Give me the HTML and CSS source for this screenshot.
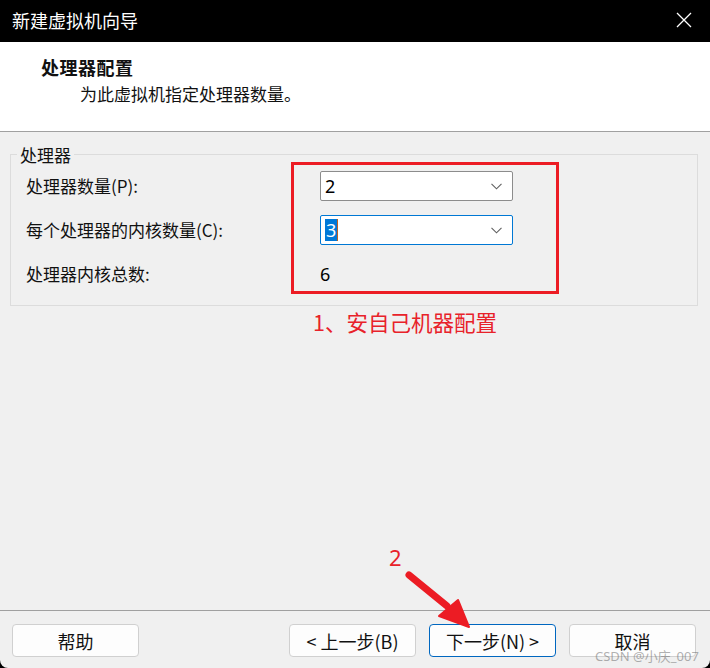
FILE: index.html
```html
<!DOCTYPE html>
<html lang="zh-CN">
<head>
<meta charset="utf-8">
<title>新建虚拟机向导</title>
<link rel="stylesheet" href="styles.css">
</head>
<body>
<div class="window">
  <div class="titlebar">
    <span class="title">新建虚拟机向导</span>
    <svg class="close" width="16" height="16" viewBox="0 0 16 16"><path d="M1 1L15 15M15 1L1 15" stroke="#fff" stroke-width="1.3" fill="none"/></svg>
  </div>
  <div class="header">
    <div class="h-title">处理器配置</div>
    <div class="h-sub">为此虚拟机指定处理器数量。</div>
  </div>
  <div class="content">
    <fieldset class="group">
      <legend>处理器</legend>
      <div class="rows">
        <div class="label">处理器数量(P):</div>
        <div class="combo">
          <span class="val">2</span>
          <svg class="chev" width="11" height="7" viewBox="0 0 11 7"><path d="M0.5 0.8L5.5 5.8L10.5 0.8" stroke="#606060" stroke-width="1.1" fill="none"/></svg>
        </div>
        <div class="label">每个处理器的内核数量(C):</div>
        <div class="combo focus">
          <span class="val sel">3</span><span class="caret"></span>
          <svg class="chev" width="11" height="7" viewBox="0 0 11 7"><path d="M0.5 0.8L5.5 5.8L10.5 0.8" stroke="#606060" stroke-width="1.1" fill="none"/></svg>
        </div>
        <div class="label">处理器内核总数:</div>
        <div class="total">6</div>
      </div>
    </fieldset>
  </div>
  <div class="footer">
    <button class="btn">帮助</button>
    <div class="nav">
      <button class="btn">&lt; 上一步(B)</button>
      <button class="btn primary">下一步(N) &gt;</button>
      <button class="btn">取消</button>
    </div>
  </div>

  <div class="redbox"></div>
  <div class="note1">1、安自己机器配置</div>
  <div class="note2">2</div>
  <svg class="arrow" width="710" height="668" viewBox="0 0 710 668">
    <line x1="409" y1="575" x2="447" y2="606" stroke="#ec1c24" stroke-width="7" stroke-linecap="round"/>
    <polygon points="439,616 458,600 469,627" fill="#ec1c24" stroke="#ec1c24" stroke-width="2" stroke-linejoin="round"/>
  </svg>
  <div class="watermark">CSDN @小庆_007</div>
</div>
</body>
</html>
```
FILE: styles.css
```css
html, body {
  margin: 0;
  padding: 0;
  background: #000;
}
.window {
  position: relative;
  width: 710px;
  height: 668px;
  display: flex;
  flex-direction: column;
  background: #f0f0f0;
  border-radius: 0 0 8px 8px;
  overflow: hidden;
  font-family: "Noto Sans CJK SC", "Noto Sans", sans-serif;
  color: #111;
}
.titlebar {
  height: 42px;
  flex: none;
  background: #000;
  color: #fff;
  display: flex;
  align-items: center;
  justify-content: space-between;
  padding: 0 18px 0 12px;
  font-size: 18px;
}
.title { line-height: 22px; margin-top: -3px; }
.close { margin-top: -3px; }
.header {
  flex: none;
  background: #fff;
  border-bottom: 1px solid #a0a0a0;
  padding-top: 14px;
  box-sizing: content-box;
  height: 75px;
}
.h-title {
  margin-left: 41px;
  font-size: 18px;
  font-weight: bold;
  line-height: 22px;
  letter-spacing: 0.5px;
}
.h-sub {
  margin-left: 80px;
  margin-top: 5px;
  font-size: 17px;
  line-height: 22px;
}
.content {
  flex: 1;
  padding: 12px 12px 0 10px;
}
.group {
  margin: 0;
  border: 1px solid #dcdcdc;
  padding: 6px 15px 16px 15px;
}
.group legend {
  font-size: 17px;
  line-height: 21px;
  padding: 0 3px;
  margin-left: -9px;
}
.rows {
  display: grid;
  grid-template-columns: 294px 193px;
  grid-auto-rows: 30px;
  row-gap: 14px;
  align-items: center;
}
.label {
  font-size: 17px;
  line-height: 22px;
}
.combo {
  height: 30px;
  box-sizing: border-box;
  background: #fff;
  border: 1px solid #8c8c8c;
  border-radius: 2px;
  display: flex;
  align-items: center;
  padding-left: 4px;
  position: relative;
}
.combo.focus { border-color: #0078d4; }
.val {
  font-family: "Noto Sans", sans-serif;
  font-size: 18px;
  line-height: 22px;
  color: #000;
}
.val.sel {
  background: #0078d7;
  color: #fff;
  padding: 0 1px;
}
.caret {
  width: 1px;
  height: 22px;
  background: #c06020;
}
.chev {
  position: absolute;
  right: 10px;
  top: 11px;
}
.total {
  font-family: "Noto Sans", sans-serif;
  font-size: 18px;
  line-height: 22px;
  color: #000;
}
.footer {
  flex: none;
  border-top: 1px solid #a0a0a0;
  padding: 13px 14px 11px 12px;
  display: flex;
  align-items: flex-start;
}
.nav {
  margin-left: auto;
  display: flex;
  gap: 13px;
}
.btn {
  width: 127px;
  height: 33px;
  box-sizing: border-box;
  background: #fdfdfd;
  border: 1px solid #d0d0d0;
  border-radius: 4px;
  font-family: "Noto Sans CJK SC", "Noto Sans", sans-serif;
  font-size: 18px;
  color: #111;
  padding: 0;
  line-height: 22px;
}
.btn.primary {
  border-color: #0067c0;
}
.redbox {
  position: absolute;
  left: 291px;
  top: 162px;
  width: 268px;
  height: 132px;
  box-sizing: border-box;
  border: 3px solid #ec1c24;
}
.note1 {
  position: absolute;
  left: 313px;
  top: 307px;
  font-size: 21.5px;
  line-height: 30px;
  color: #e8222a;
}
.note2 {
  position: absolute;
  left: 389px;
  top: 542px;
  font-family: "Noto Sans", sans-serif;
  font-size: 22px;
  line-height: 30px;
  color: #e8222a;
}
.arrow {
  position: absolute;
  left: 0;
  top: 0;
  pointer-events: none;
}
.watermark {
  position: absolute;
  left: 595px;
  top: 648px;
  font-size: 13px;
  line-height: 16px;
  color: rgba(110, 110, 110, 0.55);
  font-family: "Noto Sans", "Noto Sans CJK SC", sans-serif;
}
```
